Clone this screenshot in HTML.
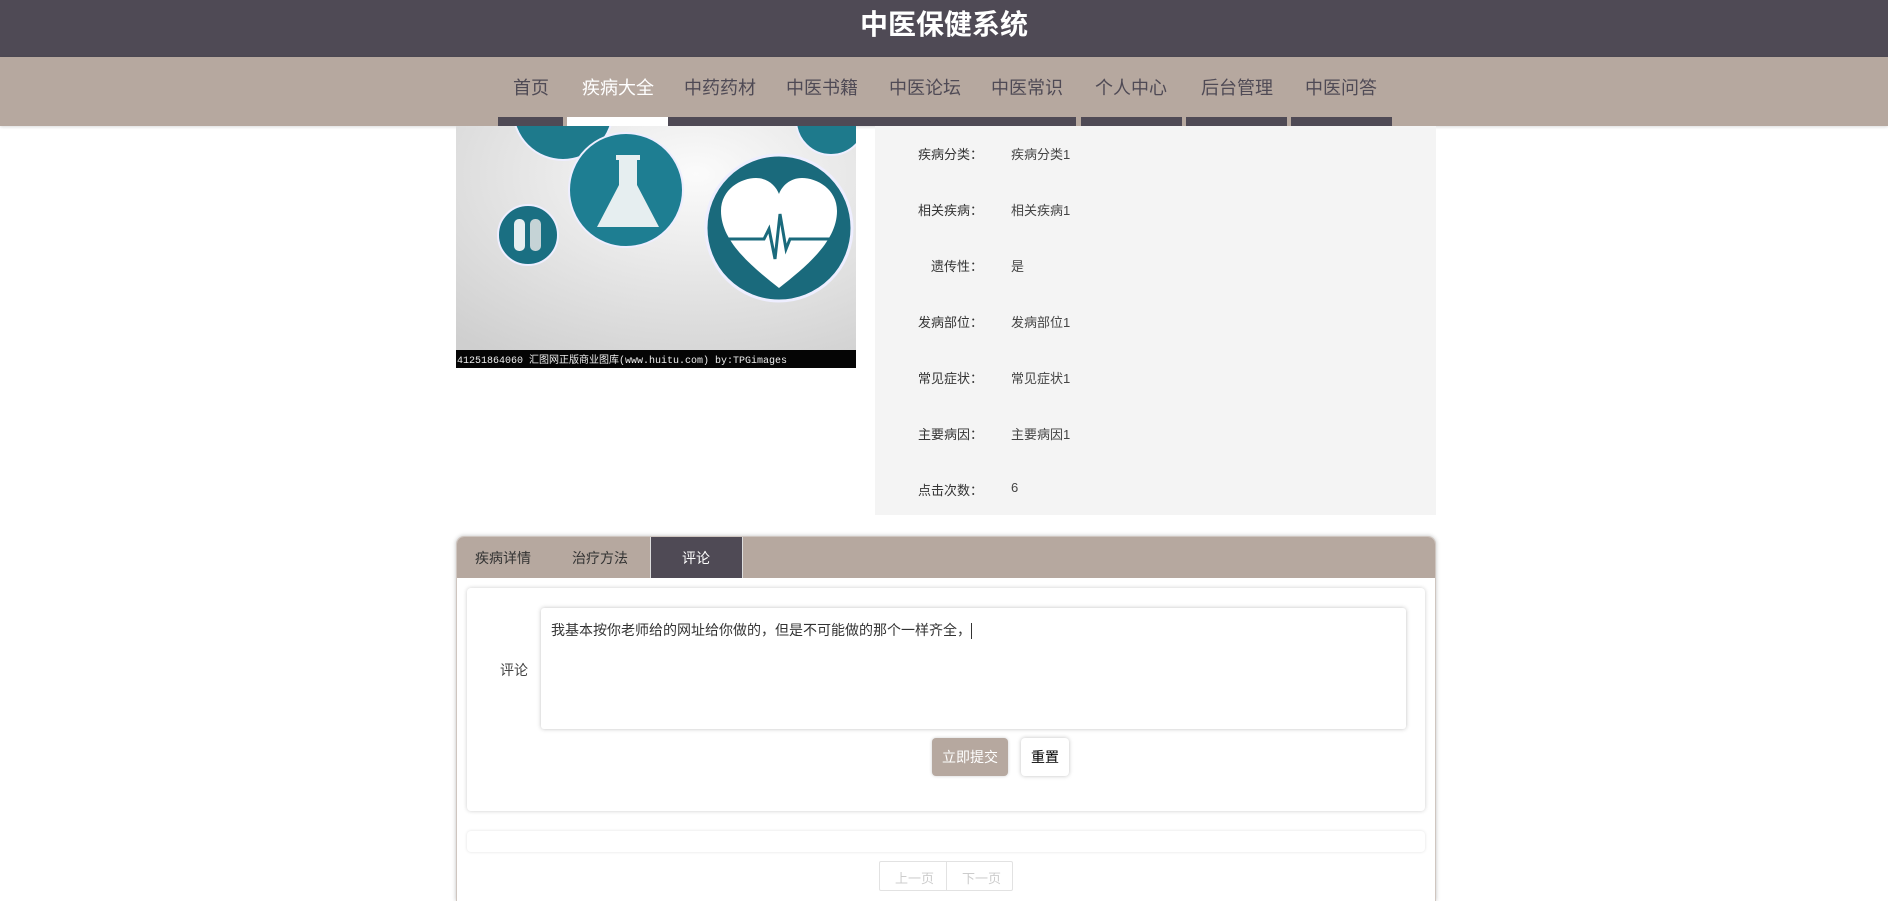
<!DOCTYPE html>
<html style="overflow:hidden;height:901px"><head><meta charset="utf-8"><style>
*{margin:0;padding:0;box-sizing:border-box}
body{width:1888px;height:901px;overflow:hidden;background:#fff;font-family:"Liberation Sans","Noto Sans CJK SC",sans-serif;position:relative}
.abs{position:absolute}
.hdr{left:0;top:0;width:1888px;height:57px;background:#4f4a55;color:#fff;font-size:28px;font-weight:bold;text-align:center;line-height:50px}
.nav{left:0;top:57px;width:1888px;height:69px;background:#b6a89f;box-shadow:0 1px 3px rgba(0,0,0,.15)}
.nav span{position:absolute;top:17px;font-size:18px;color:#4f4a55;transform:translateX(-50%)}
.bar{top:117px;height:9px;background:#4f4a55}
.info{left:875px;top:126px;width:561px;height:389px;background:#f4f4f4}
.lab{width:108px;text-align:right;left:0;font-size:13px;color:#333}
.val{left:136px;font-size:13px;color:#444}
.box{left:456px;top:536px;width:980px;height:365px;border:1px solid #cfc6c0;border-bottom:none;border-radius:8px 8px 0 0;box-shadow:0 0 4px rgba(0,0,0,.25);background:#fff;overflow:hidden}
.tabs{left:0;top:0;width:100%;height:41px;background:#b6a89f}
.tabs span{position:absolute;top:11px;font-size:14px;color:#333}
</style></head><body>
<div class="abs hdr">中医保健系统</div>
<div class="abs nav">
<span style="left:531px">首页</span>
<span style="left:618px;color:#fff">疾病大全</span>
<span style="left:720px">中药药材</span>
<span style="left:822px">中医书籍</span>
<span style="left:925px">中医论坛</span>
<span style="left:1027px">中医常识</span>
<span style="left:1131px">个人中心</span>
<span style="left:1237px">后台管理</span>
<span style="left:1341px">中医问答</span>
</div>
<div class="abs bar" style="left:498px;width:65px"></div>
<div class="abs bar" style="left:567px;width:101px;background:#fff"></div>
<div class="abs bar" style="left:668px;width:408px"></div>
<div class="abs bar" style="left:1081px;width:101px"></div>
<div class="abs bar" style="left:1186px;width:101px"></div>
<div class="abs bar" style="left:1291px;width:101px"></div>

<svg class="abs" style="left:456px;top:126px" width="400" height="242" viewBox="0 0 400 242">
<defs><radialGradient id="g" cx="0.6" cy="0.2" r="0.9"><stop offset="0" stop-color="#fbfbfb"/><stop offset="1" stop-color="#cfcfcf"/></radialGradient></defs>
<rect width="400" height="242" fill="url(#g)"/>
<circle cx="107" cy="-16" r="50" fill="#1e7a8c" stroke="#eef" stroke-width="2"/>
<circle cx="375" cy="-6" r="35" fill="#1e7a8c" stroke="#eef" stroke-width="2"/>
<circle cx="170" cy="64" r="57" fill="#1e7e92" stroke="#eef" stroke-width="2"/>
<path d="M160 29h24v5h-3v25l22 42h-62l22-42v-25h-3z" fill="#e6eef0"/>
<circle cx="72" cy="109" r="30" fill="#1a6f82" stroke="#eef" stroke-width="2"/>
<rect x="58" y="93" width="11" height="32" rx="5" fill="#e6eef0"/><rect x="74" y="93" width="11" height="32" rx="5" fill="#c5d3d6"/>
<circle cx="323" cy="102" r="73" fill="#1a6a7c" stroke="#eef" stroke-width="3"/>
<path d="M323 162 C295 140 265 115 265 85 C265 63 285 52 300 52 C312 52 320 60 323 68 C326 60 334 52 346 52 C361 52 381 63 381 85 C381 115 351 140 323 162Z" fill="#fff"/>
<path d="M268 113h40l5-10 6 30 5-45 6 35 4-10h45" fill="none" stroke="#1a6a7c" stroke-width="3"/>
<rect x="0" y="224" width="400" height="18" fill="#050505"/>
<text x="1" y="237" font-size="10" fill="#eee" font-family="Liberation Mono,Noto Sans CJK SC,monospace">41251864060  汇图网正版商业图库(www.huitu.com) by:TPGimages</text>
</svg>

<div class="abs info">
<div class="abs lab" style="top:18px">疾病分类：</div><div class="abs val" style="top:18px">疾病分类1</div>
<div class="abs lab" style="top:74px">相关疾病：</div><div class="abs val" style="top:74px">相关疾病1</div>
<div class="abs lab" style="top:130px">遗传性：</div><div class="abs val" style="top:130px">是</div>
<div class="abs lab" style="top:186px">发病部位：</div><div class="abs val" style="top:186px">发病部位1</div>
<div class="abs lab" style="top:242px">常见症状：</div><div class="abs val" style="top:242px">常见症状1</div>
<div class="abs lab" style="top:298px">主要病因：</div><div class="abs val" style="top:298px">主要病因1</div>
<div class="abs lab" style="top:354px">点击次数：</div><div class="abs val" style="top:354px">6</div>
</div>

<div class="abs box">
<div class="abs tabs">
<span style="left:18px">疾病详情</span>
<span style="left:115px">治疗方法</span>
<div class="abs" style="left:193px;top:0;width:93px;height:41px;background:#4f4a55;border-left:1px solid #ddd;border-right:1px solid #ddd"></div>
<span style="left:225px;color:#fff">评论</span>
</div>
<div class="abs" style="left:10px;top:51px;width:958px;height:223px;border-radius:4px;box-shadow:0 0 4px rgba(0,0,0,.2);background:#fff"></div>
<div class="abs" style="left:43px;top:123px;font-size:14px;color:#444">评论</div>
<div class="abs" style="left:84px;top:71px;width:865px;height:121px;border-radius:3px;box-shadow:0 0 4px rgba(0,0,0,.25);background:#fff;font-size:14px;color:#333;padding:12px 10px">我基本按你老师给的网址给你做的，但是不可能做的那个一样齐全，<span style="display:inline-block;width:1px;height:16px;background:#333;vertical-align:middle"></span></div>
<div class="abs" style="left:475px;top:201px;width:76px;height:38px;border-radius:4px;background:#b6a89f;color:#fff;font-size:14px;text-align:center;line-height:38px;box-shadow:0 0 3px rgba(0,0,0,.2)">立即提交</div>
<div class="abs" style="left:564px;top:201px;width:48px;height:38px;border-radius:4px;background:#fff;color:#000;font-size:14px;text-align:center;line-height:38px;box-shadow:0 0 4px rgba(0,0,0,.25)">重置</div>
<div class="abs" style="left:10px;top:294px;width:958px;height:21px;border-radius:4px;box-shadow:0 0 3px rgba(0,0,0,.12);background:#fff"></div>
<div class="abs" style="left:422px;top:324px;width:134px;height:30px;border:1px solid #e2e2e2;border-radius:2px;font-size:13px;color:#ccc">
<span class="abs" style="left:15px;top:6px">上一页</span><div class="abs" style="left:66px;top:0;width:1px;height:28px;background:#e2e2e2"></div><span class="abs" style="left:82px;top:6px">下一页</span></div>
</div>
</body></html>
